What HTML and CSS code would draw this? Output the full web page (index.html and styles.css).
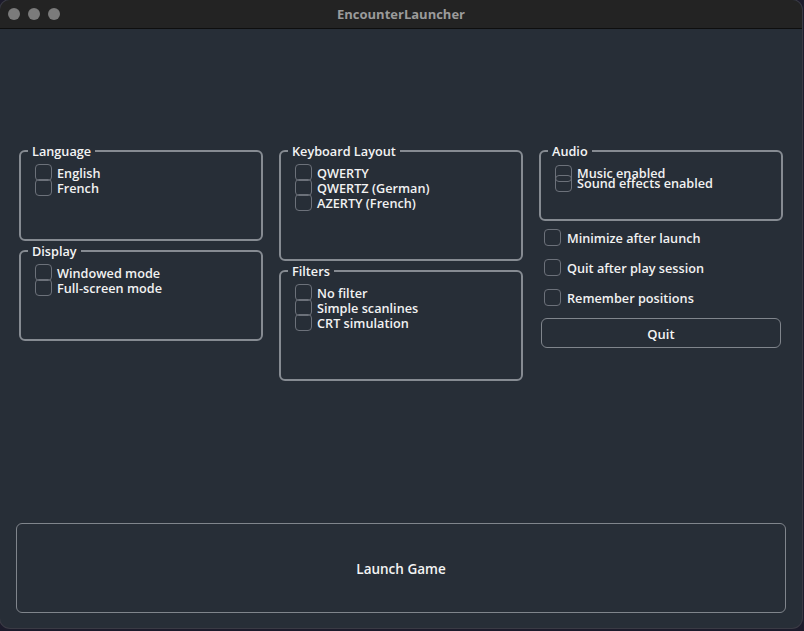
FILE: index.html
```html
<!DOCTYPE html>
<html>
<head>
<meta charset="utf-8">
<title>EncounterLauncher</title>
<link rel="stylesheet" href="styles.css">
</head>
<body>
<div class="window">
  <div class="titlebar">
    <div class="lights"><span class="light"></span><span class="light"></span><span class="light"></span></div>
    <div class="title">EncounterLauncher</div>
  </div>
  <div class="content">
    <div class="columns">
      <div class="col">
        <fieldset class="group g-lang">
          <legend>Language</legend>
          <label class="check"><span class="box"></span>English</label>
          <label class="check"><span class="box"></span>French</label>
        </fieldset>
        <fieldset class="group g-display">
          <legend>Display</legend>
          <label class="check"><span class="box"></span>Windowed mode</label>
          <label class="check"><span class="box"></span>Full-screen mode</label>
        </fieldset>
      </div>
      <div class="col">
        <fieldset class="group g-keys">
          <legend>Keyboard Layout</legend>
          <label class="check"><span class="box"></span>QWERTY</label>
          <label class="check"><span class="box"></span>QWERTZ (German)</label>
          <label class="check"><span class="box"></span>AZERTY (French)</label>
        </fieldset>
        <fieldset class="group g-filters">
          <legend>Filters</legend>
          <label class="check"><span class="box"></span>No filter</label>
          <label class="check"><span class="box"></span>Simple scanlines</label>
          <label class="check"><span class="box"></span>CRT simulation</label>
        </fieldset>
      </div>
      <div class="col">
        <fieldset class="group g-audio">
          <legend>Audio</legend>
          <label class="check tight"><span class="box"></span>Music enabled</label>
          <label class="check tight"><span class="box"></span>Sound effects enabled</label>
        </fieldset>
        <div class="options">
          <label class="opt"><span class="box"></span>Minimize after launch</label>
          <label class="opt"><span class="box"></span>Quit after play session</label>
          <label class="opt"><span class="box"></span>Remember positions</label>
        </div>
        <button class="btn quit">Quit</button>
      </div>
    </div>
    <button class="btn launch">Launch Game</button>
  </div>
</div>
</body>
</html>
```
FILE: styles.css
```css
* { box-sizing: border-box; }
html, body { margin: 0; padding: 0; }
body {
  background: #1c1b2b;
  width: 804px;
  height: 631px;
  overflow: hidden;
  font-family: "Open Sans", "DejaVu Sans", sans-serif;
  font-weight: 600;
  font-size: 12.7px;
  color: #f2f2f2;
}
.window {
  width: 802px;
  height: 628px;
  background: #272e37;
  border-radius: 10px;
  overflow: hidden;
  display: flex;
  flex-direction: column;
  box-shadow: 0 0 0 1px #3a3a44;
}
.titlebar {
  height: 29px;
  flex: none;
  background: #232323;
  border-bottom: 1px solid #0e0e0e;
  position: relative;
  display: flex;
  align-items: center;
  justify-content: center;
}
.lights {
  position: absolute;
  left: 8px;
  top: 8px;
  display: flex;
  gap: 8px;
}
.light {
  width: 12px;
  height: 12px;
  border-radius: 50%;
  background: #7b7b7b;
}
.title {
  color: #9b9b9b;
  font-weight: 700;
  font-size: 13px;
}
.content {
  flex: 1;
  display: flex;
  flex-direction: column;
  padding: 114px 16px 15px 16px;
}
.columns {
  flex: 1;
  display: flex;
  gap: 16px;
  padding-left: 3px;
}
.col {
  width: 244px;
  display: flex;
  flex-direction: column;
}
.group {
  margin: 0;
  border: 2px solid #868b92;
  border-radius: 6px;
  padding: 6px 10px 0 14px;
  min-width: 0;
}
.group legend {
  font-size: 12.7px;
  line-height: 16px;
  padding: 0 4px;
  margin-left: -7px;
  color: #f4f4f4;
}
.g-lang { height: 98px; }
.g-display { height: 98px; margin-top: 2px; }
.g-keys { height: 118px; }
.g-filters { height: 118px; margin-top: 2px; }
.g-audio { height: 78px; padding-top: 9px; }
.check {
  display: flex;
  align-items: center;
  height: 15px;
  gap: 5px;
  white-space: nowrap;
}
.check.tight { height: 10px; }
.box {
  flex: none;
  width: 17px;
  height: 17px;
  border: 1.5px solid #6c717a;
  border-radius: 4px;
  background: #272e37;
}
.check .box { background: transparent; }
.options {
  display: flex;
  flex-direction: column;
  padding-left: 5px;
  margin-top: 8px;
  gap: 13px;
}
.opt {
  display: flex;
  align-items: center;
  height: 17px;
  gap: 6px;
  white-space: nowrap;
}
.btn {
  font-family: inherit;
  font-weight: 600;
  font-size: 13px;
  color: #f4f4f4;
  background: #272e37;
  border: 1.5px solid #80858c;
  border-radius: 6px;
  cursor: pointer;
}
.quit {
  margin-top: 12px;
  margin-left: 2px;
  width: 240px;
  height: 30px;
  padding-top: 2px;
}
.launch {
  width: 770px;
  height: 90px;
  flex: none;
  font-size: 13.5px;
  padding-top: 3px;
}
```
